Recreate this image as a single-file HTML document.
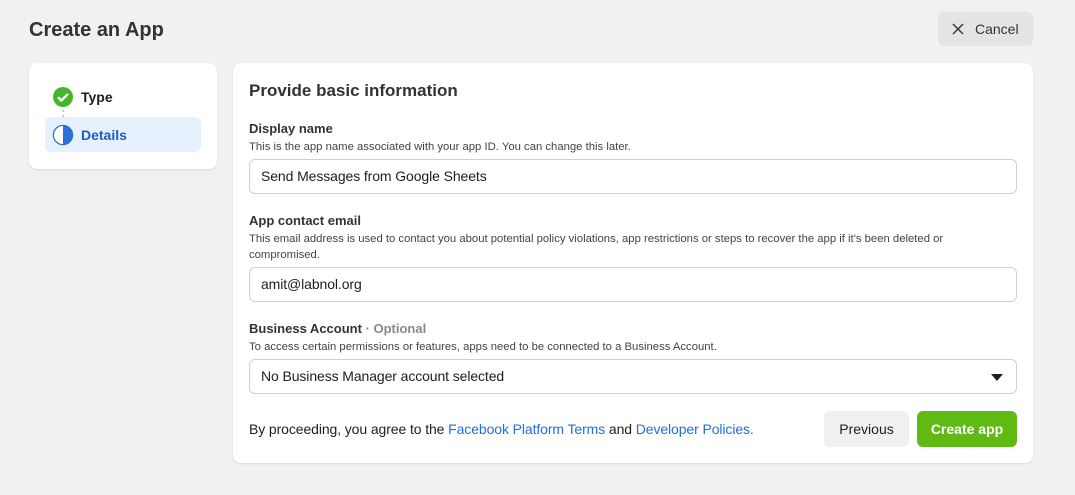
<!DOCTYPE html>
<html><head><style>
*{box-sizing:border-box;margin:0;padding:0}
body{width:1075px;height:495px;background:#f1f1f1;font-family:"Liberation Sans",Arial,sans-serif;color:#1c1e21;position:relative;overflow:hidden}
.a{position:absolute}
.card{background:#fff;border-radius:8px;box-shadow:0 1px 2px rgba(0,0,0,.1)}
.lbl{font-size:13px;font-weight:bold;color:#333}
.help{font-size:11.3px;color:#444;line-height:16px}
.inp{border:1px solid #ccd0d5;border-radius:6px;height:35px;width:768px;font-size:14px;padding:0 11px;line-height:33px;color:#1c1e21;letter-spacing:-0.1px}
.link{color:#216fdb}
</style></head><body>
<div class="a" style="left:29px;top:19px;font-size:20px;font-weight:bold;color:#333">Create an App</div>
<div class="a" style="left:938px;top:12px;width:95px;height:34px;background:#e4e4e4;border-radius:6px;font-size:14px;color:#333;line-height:34px;padding-left:37px">Cancel
<svg class="a" style="left:14px;top:11px" width="12" height="12" viewBox="0 0 12 12"><path d="M1 1L11 11M11 1L1 11" stroke="#333" stroke-width="1.4"/></svg></div>
<div class="a card" style="left:29px;top:63px;width:188px;height:106px"></div>
<div class="a" style="left:45px;top:117px;width:156px;height:35px;background:#e7f0fd;border-radius:6px"></div>
<svg class="a" style="left:52px;top:86px" width="22" height="22" viewBox="0 0 22 22"><circle cx="11" cy="11" r="10" fill="#42b72a"/><path d="M6 11.2l3.3 3.3L16 8" stroke="#fff" stroke-width="2.4" fill="none"/></svg>
<div class="a" style="left:62px;top:110px;width:2px;height:2px;background:#ccc"></div>
<div class="a" style="left:62px;top:115px;width:2px;height:2px;background:#ccc"></div>
<svg class="a" style="left:52px;top:124px" width="22" height="22" viewBox="0 0 22 22"><circle cx="11" cy="11" r="9.6" fill="#fff" stroke="#2d6fd6" stroke-width="1.3"/><path d="M11 1.4A9.6 9.6 0 0 1 11 20.6Z" fill="#2d6fd6"/></svg>
<div class="a" style="left:81px;top:89px;font-size:14px;font-weight:bold;color:#1c1e21">Type</div>
<div class="a" style="left:81px;top:127px;font-size:14px;font-weight:bold;color:#1f5fc4">Details</div>

<div class="a card" style="left:233px;top:63px;width:800px;height:400px"></div>
<div class="a" style="left:249px;top:81px;font-size:17px;font-weight:bold;color:#333">Provide basic information</div>
<div class="a lbl" style="left:249px;top:121px">Display name</div>
<div class="a help" style="left:249px;top:139px">This is the app name associated with your app ID. You can change this later.</div>
<div class="a inp" style="left:249px;top:159px">Send Messages from Google Sheets</div>
<div class="a lbl" style="left:249px;top:213px">App contact email</div>
<div class="a help" style="left:249px;top:231px;width:760px">This email address is used to contact you about potential policy violations, app restrictions or steps to recover the app if it's been deleted or<br>compromised.</div>
<div class="a inp" style="left:249px;top:267px">amit@labnol.org</div>
<div class="a lbl" style="left:249px;top:321px">Business Account <span style="color:#888">· Optional</span></div>
<div class="a help" style="left:249px;top:339px">To access certain permissions or features, apps need to be connected to a Business Account.</div>
<div class="a inp" style="left:249px;top:359px">No Business Manager account selected
<svg class="a" style="left:741px;top:14px" width="12" height="7" viewBox="0 0 12 7"><path d="M0 0H12L6 7Z" fill="#1c1e21"/></svg></div>
<div class="a" style="left:249px;top:421px;font-size:14px;letter-spacing:-0.1px">By proceeding, you agree to the <span class="link">Facebook Platform Terms</span> and <span class="link">Developer Policies.</span></div>
<div class="a" style="left:824px;top:411px;width:85px;height:36px;background:#f0f0f0;border-radius:6px;font-size:14px;text-align:center;line-height:36px;color:#1c1e21">Previous</div>
<div class="a" style="left:917px;top:411px;width:100px;height:36px;background:#5fbb14;border-radius:6px;font-size:14px;font-weight:bold;text-align:center;line-height:36px;color:#fff">Create app</div>
</body></html>
